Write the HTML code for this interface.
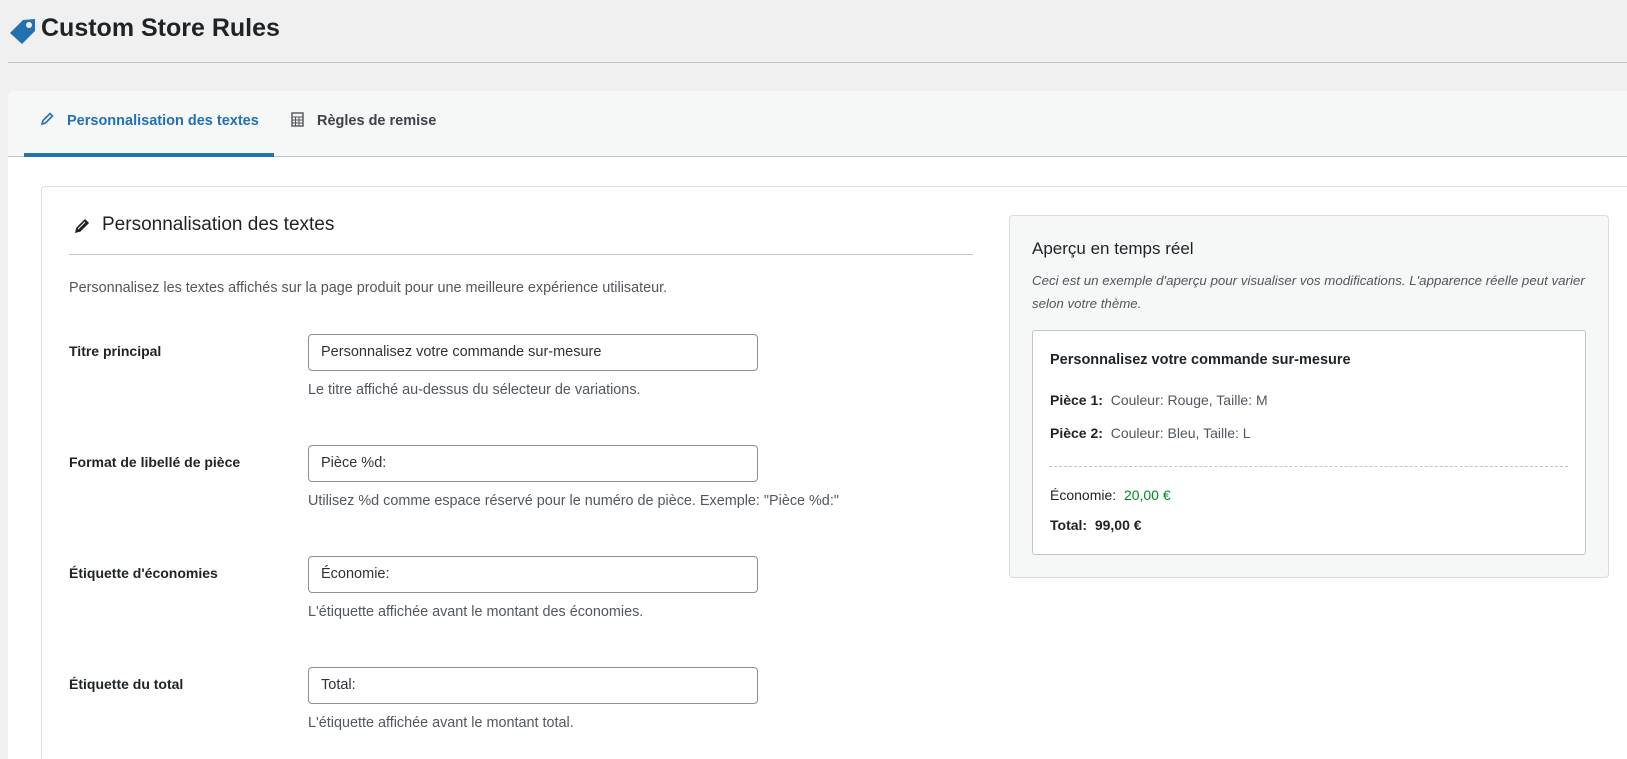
<!DOCTYPE html>
<html><head><meta charset="utf-8"><style>
*{box-sizing:border-box;margin:0;padding:0}
html,body{width:1627px;height:759px;overflow:hidden}
body{background:#f0f0f1;font-family:"Liberation Sans",sans-serif;color:#1d2327;font-size:14px;position:relative}
.a{position:absolute;white-space:nowrap}
.title{left:41px;top:14px;font-size:25px;font-weight:bold;color:#1d2327}
.hr1{left:8px;top:62px;width:1619px;height:1px;background:#c3c4c7}
.panel{left:8px;top:91px;width:1640px;height:760px;background:#fff;border-radius:6px}
.tabbar{left:8px;top:91px;width:1640px;height:66px;background:#f6f7f7;border-bottom:1px solid #c3c4c7;border-radius:6px 0 0 0}
.tab{top:113px;font-size:14.5px;font-weight:bold}
.ul{left:24px;top:153px;width:250px;height:4px;background:#2271b1}
.card{left:41px;top:186px;width:1640px;height:700px;border:1px solid #dcdcde;border-radius:4px;background:#fff}
.h2{left:102px;top:214px;font-size:19px;font-weight:500}
.hr2{left:69px;top:254px;width:904px;height:1px;background:#c3c4c7}
.desc{color:#50575e;font-size:14.4px}
.lbl{left:69px;font-weight:bold;font-size:14px}
.inp{left:308px;width:450px;height:37px;border:1px solid #8c8f94;border-radius:4px;background:#fff;padding:0 12px;line-height:35px;font-size:14.5px;color:#2c3338}
.prev{left:1009px;top:215px;width:600px;height:363px;background:#f6f7f7;border:1px solid #dcdcde;border-radius:4px}
.box{left:1032px;top:330px;width:554px;height:225px;background:#fff;border:1px solid #c3c4c7;border-radius:3px}
.it{font-style:italic;color:#50575e;font-size:13.3px}
</style></head><body>
<svg class="a" style="left:8px;top:16px" width="30" height="30" viewBox="0 0 30 30"><path d="M2 17 L15 4 L27 3 L27 15 L14 28 Z" fill="#2271b1"/><circle cx="21" cy="9" r="3" fill="#f0f0f1"/></svg>
<div class="a title">Custom Store Rules</div>
<div class="a hr1"></div>
<div class="a panel"></div>
<div class="a tabbar"></div>
<svg class="a" style="left:40px;top:112px" width="14" height="14" viewBox="0 0 14 14"><path d="M2 12 L3 8.5 L10 1.5 L12.5 4 L5.5 11 Z" fill="none" stroke="#2271b1" stroke-width="1.6"/></svg>
<div class="a tab" style="left:67px;color:#2271b1">Personnalisation des textes</div>
<svg class="a" style="left:291px;top:112px" width="13" height="15" viewBox="0 0 13 15"><rect x="1" y="1" width="11" height="13" fill="none" stroke="#50575e" stroke-width="1.4"/><path d="M1 5H12M1 8H12M1 11H12M4.5 5V14M8 5V14" stroke="#50575e" stroke-width="1"/></svg>
<div class="a tab" style="left:317px;color:#3c434a">Règles de remise</div>
<div class="a ul"></div>
<div class="a card"></div>
<svg class="a" style="left:74px;top:218px" width="16" height="16" viewBox="0 0 16 16"><path d="M2 14 L3 10 L11 2 L14 5 L6 13 Z" fill="#1d2327" stroke="#1d2327" stroke-width="1.5"/><path d="M4 11 L11 4" stroke="#fff" stroke-width="1"/></svg>
<div class="a h2">Personnalisation des textes</div>
<div class="a hr2"></div>
<div class="a desc" style="left:69px;top:280px">Personnalisez les textes affichés sur la page produit pour une meilleure expérience utilisateur.</div>

<div class="a lbl" style="top:343px">Titre principal</div>
<div class="a inp" style="top:334px">Personnalisez votre commande sur-mesure</div>
<div class="a desc" style="left:308px;top:382px">Le titre affiché au-dessus du sélecteur de variations.</div>

<div class="a lbl" style="top:454px">Format de libellé de pièce</div>
<div class="a inp" style="top:445px">Pièce %d:</div>
<div class="a desc" style="left:308px;top:493px">Utilisez %d comme espace réservé pour le numéro de pièce. Exemple: "Pièce %d:"</div>

<div class="a lbl" style="top:565px">Étiquette d'économies</div>
<div class="a inp" style="top:556px">Économie:</div>
<div class="a desc" style="left:308px;top:604px">L'étiquette affichée avant le montant des économies.</div>

<div class="a lbl" style="top:676px">Étiquette du total</div>
<div class="a inp" style="top:667px">Total:</div>
<div class="a desc" style="left:308px;top:715px">L'étiquette affichée avant le montant total.</div>

<div class="a prev"></div>
<div class="a" style="left:1032px;top:239px;font-size:17px;font-weight:500">Aperçu en temps réel</div>
<div class="a it" style="left:1032px;top:273px">Ceci est un exemple d'aperçu pour visualiser vos modifications. L'apparence réelle peut varier</div>
<div class="a it" style="left:1032px;top:296px">selon votre thème.</div>
<div class="a box"></div>
<div class="a" style="left:1050px;top:352px;font-size:14.5px;font-weight:bold">Personnalisez votre commande sur-mesure</div>
<div class="a" style="left:1050px;top:392px;font-size:14px"><b>Pièce 1:</b>&nbsp; <span style="color:#50575e">Couleur: Rouge, Taille: M</span></div>
<div class="a" style="left:1050px;top:425px;font-size:14px"><b>Pièce 2:</b>&nbsp; <span style="color:#50575e">Couleur: Bleu, Taille: L</span></div>
<div class="a" style="left:1049px;top:466px;width:519px;border-top:1px dashed #c3c4c7"></div>
<div class="a" style="left:1050px;top:487px;font-size:14px;font-weight:500">Économie:&nbsp; <span style="color:#008a20">20,00 €</span></div>
<div class="a" style="left:1050px;top:517px;font-size:14px;font-weight:bold">Total:&nbsp; 99,00 €</div>
</body></html>
